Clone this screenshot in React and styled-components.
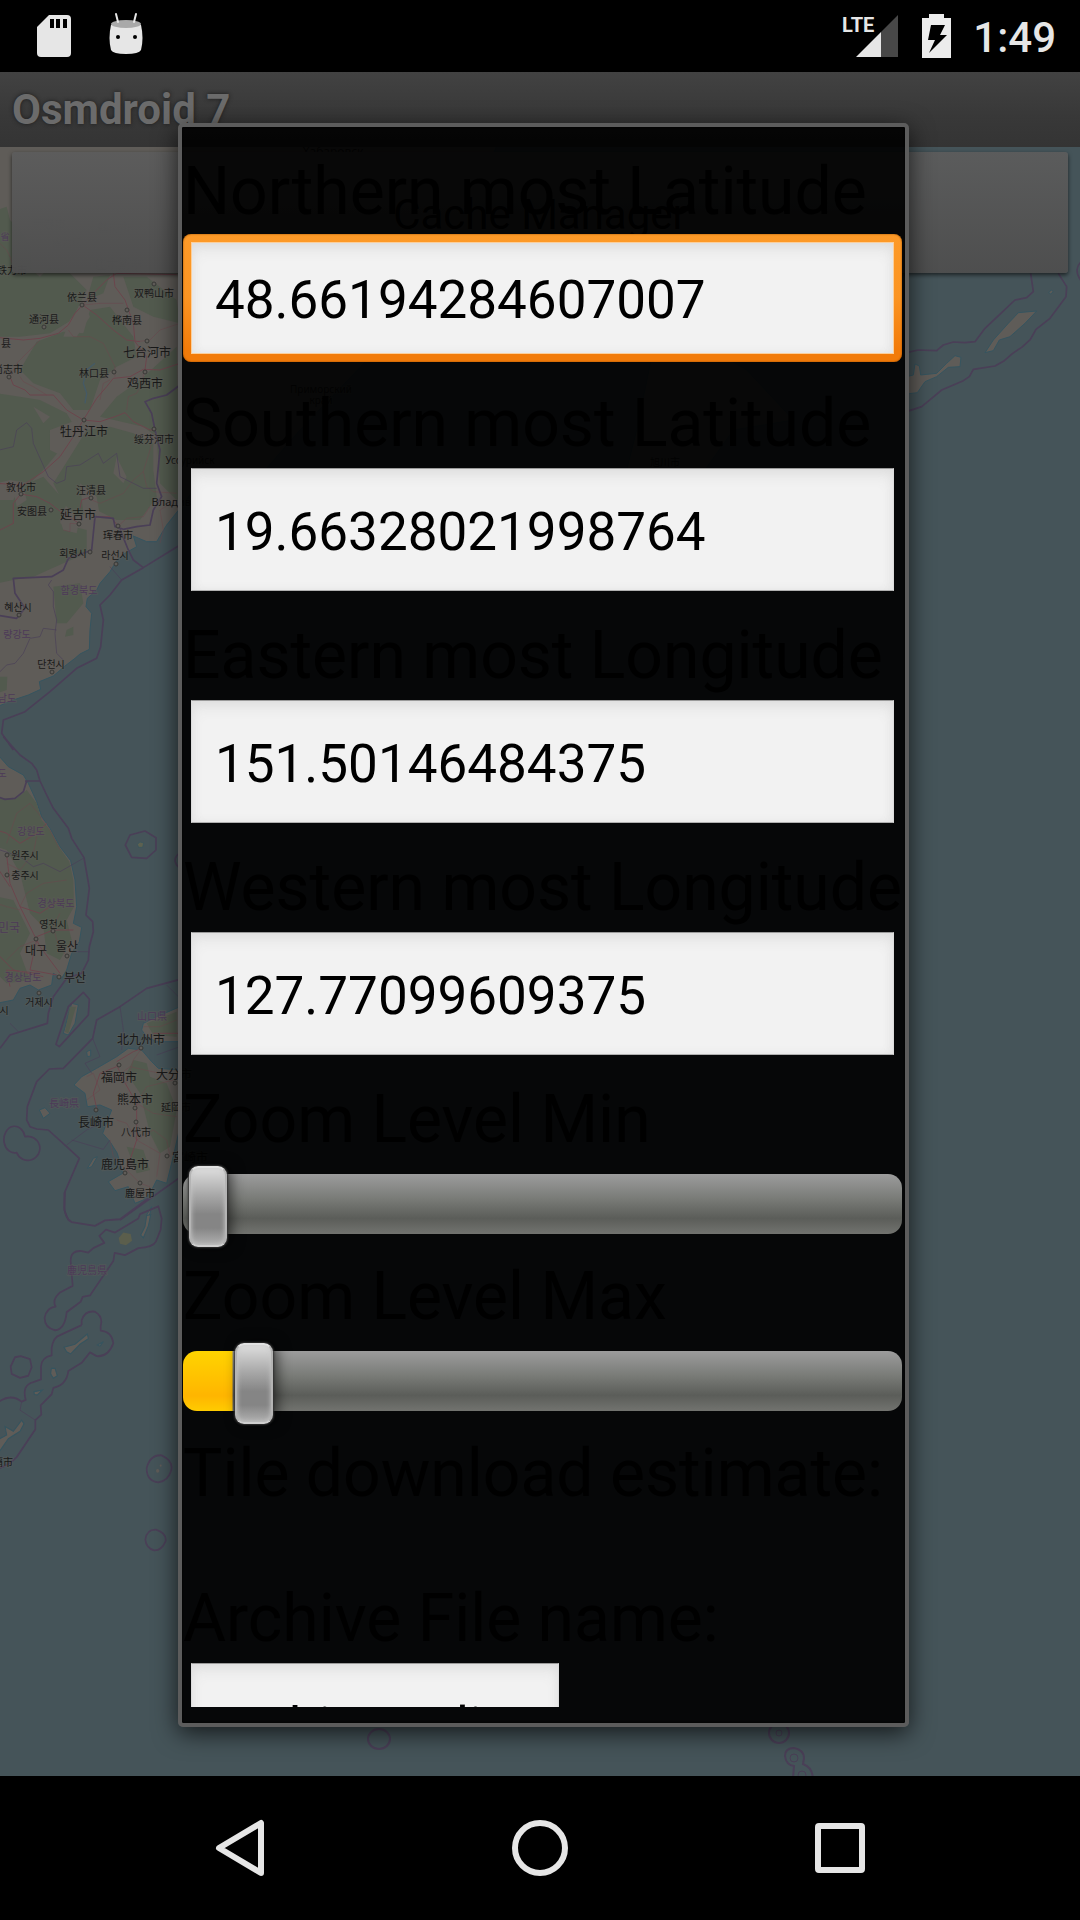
import React, { useState } from "react";
import styled, { createGlobalStyle, css } from "styled-components";

const GlobalStyle = createGlobalStyle`
  *, *::before, *::after { box-sizing: border-box; }
  body { margin: 0; background: #000; font-family: Roboto, "Noto Sans", sans-serif; }
`;

const Screen = styled.div`
  position: relative;
  display: flex;
  flex-direction: column;
  height: 100vh;
  overflow: hidden;
  background: #000;
`;

const StatusBar = styled.header`
  display: flex;
  flex: none;
  align-items: center;
  justify-content: space-between;
  height: 72px;
  padding: 0 24px 0 36px;
  background: #000;
`;

const StatusGroup = styled.div`
  display: flex;
  align-items: center;
  gap: ${(p) => p.$gap}px;
`;

const Clock = styled.time`
  margin-left: 22px;
  padding-top: 3px;
  color: #e6e6e6;
  font-size: 42px;
  font-weight: 500;
  line-height: 48px;
`;

const Signal = styled.div`
  display: flex;
  align-items: flex-start;
  margin-right: 24px;
`;

const Network = styled.span`
  margin-right: -18px;
  color: #e6e6e6;
  font-size: 20px;
  font-weight: 700;
  line-height: 20px;
`;

const Activity = styled.main`
  position: relative;
  display: flex;
  flex: 1;
  flex-direction: column;
  min-height: 0;
`;

const TitleBar = styled.h1`
  flex: none;
  height: 75px;
  margin: 0;
  padding-left: 12px;
  background: linear-gradient(#424242, #383838 60%, #343434);
  color: #6b6b6b;
  font-size: 42px;
  font-weight: 700;
  line-height: 75px;
  text-shadow: 0 0 4px #1c1c1c;
`;

const MapArea = styled.section`
  position: relative;
  flex: 1;
  min-height: 0;
  padding: 5px 12px;
  background: #455459;
`;

const MapDrawing = styled.svg`
  position: absolute;
  inset: 0;
  width: 100%;
  height: 100%;
  font-family: "Noto Sans", "Noto Sans CJK SC", "Noto Sans CJK KR", sans-serif;
`;

const MapButton = styled.button`
  position: relative;
  display: block;
  width: 100%;
  height: 121px;
  padding: 4px 0 0;
  border: 0;
  border-radius: 3px;
  background: linear-gradient(rgba(92, 92, 92, 0.95), rgba(78, 78, 78, 0.97));
  box-shadow: 0 2px 4px rgba(0, 0, 0, 0.6);
  color: #000;
  font: 400 42px/50px Roboto, sans-serif;
`;

const Overlay = styled.div`
  position: absolute;
  inset: 0;
  display: flex;
  padding: 51px 171px 49px 178px;
`;

const Dialog = styled.form`
  display: flex;
  flex: 1;
  flex-direction: column;
  min-width: 0;
  padding: 0 3px 16px 1px;
  border: 4px solid #5c5c5c;
  border-radius: 5px;
  background: rgba(0, 0, 0, 0.91);
  background-clip: padding-box;
  box-shadow: 0 6px 24px rgba(0, 0, 0, 0.7), inset 0 0 2px #000;
`;

const ScrollPane = styled.div`
  display: flex;
  flex: 1;
  flex-direction: column;
  min-height: 0;
  padding-top: 26px;
  overflow: hidden;
`;

const Field = styled.div`
  flex: none;
`;

const Label = styled.label`
  display: block;
  color: #000;
  font-size: 66px;
  line-height: 78px;
  white-space: nowrap;
`;

const activeFrame = css`
  padding: 8px;
  background: linear-gradient(#fd9a28, #fb9422 50%, #f27b0a 90%);
  box-shadow: inset 0 0 2px #8a4500;
`;

const Frame = styled.div`
  width: ${(p) => (p.$narrow ? "384px" : "100%")};
  height: 128px;
  margin: 3px 0 23px;
  padding: 2px 8px 3px;
  border-radius: 8px;
  ${(p) => p.$active && activeFrame}
`;

const TextBox = styled.input`
  display: block;
  width: 100%;
  height: 100%;
  padding: 4px 23px 0;
  border: 1px solid;
  border-color: ${(p) => (p.$active ? "#fbcf9c" : "#9a9a9a #dcdcdc #b0b0b0")};
  border-radius: 0;
  outline: 0;
  background: #f2f2f2;
  box-shadow: inset 0 8px 16px -4px #dcdcdc, inset 0 0 10px #e4e4e4;
  color: #000;
  font: 400 53px/63px Roboto, sans-serif;
`;

const Slider = styled.input`
  display: block;
  width: 100%;
  height: 60px;
  margin: 15px 0 24px;
  padding: 0 6px;
  border-radius: 14px;
  outline: 0;
  appearance: none;
  background-image: linear-gradient(#ffd400, #ffb500 75%, #ffcc00),
    linear-gradient(#9c9c9c, #7a7c78 40%, #5b5d59 74%, #72736f);
  background-repeat: no-repeat;

  &::-webkit-slider-runnable-track {
    height: 60px;
  }

  &::-webkit-slider-thumb {
    width: 38px;
    height: 81px;
    margin-top: -8px;
    border: 2px solid #c6c6c6;
    border-color: #e2e2e2 #b4b4b4 #cfcfcf;
    border-radius: 9px;
    appearance: none;
    background: linear-gradient(#dedede, #a8a8a8 35%, #858585 60%, #858585 78%, #b0b0b0);
    box-shadow: 0 0 2px 1px #333, 4px 0 14px rgba(0, 0, 0, 0.6), inset 0 0 5px #c8c8c8;
  }
`;

const Estimate = styled.output`
  display: block;
  height: 67px;
`;

const NavBar = styled.nav`
  display: flex;
  flex: none;
  align-items: center;
  justify-content: center;
  gap: 180px;
  height: 144px;
  background: #000;
`;

const NavButton = styled.button`
  display: flex;
  align-items: center;
  justify-content: center;
  width: 120px;
  height: 120px;
  padding: 0;
  border: 0;
  background: transparent;
`;

const bounds = [
  { id: "north", label: "Northern most Latitude", value: "48.66194284607007", active: true },
  { id: "south", label: "Southern most Latitude", value: "19.66328021998764" },
  { id: "east", label: "Eastern most Longitude", value: "151.50146484375" },
  { id: "west", label: "Western most Longitude", value: "127.77099609375" },
];

const MAX_ZOOM = 29;

function BoundField({ id, label, value, active, narrow }) {
  return (
    <Field>
      <Label htmlFor={id}>{label}</Label>
      <Frame $active={active} $narrow={narrow}>
        <TextBox id={id} $active={active} defaultValue={value} />
      </Frame>
    </Field>
  );
}

function ZoomField({ id, label, initial }) {
  const [value, setValue] = useState(initial);
  return (
    <Field>
      <Label htmlFor={id}>{label}</Label>
      <Slider
        id={id}
        type="range"
        min="0"
        max={MAX_ZOOM}
        value={value}
        onChange={(e) => setValue(Number(e.target.value))}
        style={{ backgroundSize: `${(value / MAX_ZOOM) * 100}% 100%, 100% 100%` }}
      />
    </Field>
  );
}

const C = {
  land: "#5f5c58",
  green: "#525a4e",
  border: "#4a3f57",
  road: "#6b454c",
  coast: "#35545f",
};

const INK = "#191919";
const PURPLE = "#4d3a58";

// text, centre x, centre y, size, colour
const places = [
  ["依兰县", 82, 297, 10], ["双鸭山市", 154, 293, 10], ["通河县", 44, 319, 10],
  ["桦南县", 127, 320, 10], ["七台河市", 147, 352, 12], ["县", 6, 343, 10],
  ["尚志市", 8, 369, 10], ["林口县", 94, 373, 10], ["鸡西市", 145, 383, 12],
  ["牡丹江市", 84, 431, 12], ["绥芬河市", 154, 439, 10], ["敦化市", 21, 487, 10],
  ["汪清县", 91, 490, 10], ["安图县", 32, 511, 10], ["延吉市", 78, 514, 12],
  ["珲春市", 118, 535, 10], ["회령시", 73, 553, 10], ["라선시", 115, 555, 10],
  ["함경북도", 79, 590, 10, PURPLE], ["혜산시", 18, 607, 10], ["량강도", 17, 634, 10, PURPLE],
  ["단천시", 51, 664, 10], ["남도", 7, 698, 10, PURPLE], ["Уссурийск", 190, 460, 10],
  ["Владивосток", 186, 501, 11], ["伊春市", 49, 223, 11, "#4f4f4f"],
  ["鹤岗市", 114, 227, 11, "#4f4f4f"], ["南岔区", 67, 243, 10, "#4f4f4f"],
  ["佳木斯市", 118, 264, 12, "#4c4c4c"], ["铁力市", 12, 270, 10], ["省", 5, 236, 9, PURPLE],
  ["도", 2, 773, 10, PURPLE], ["강원도", 31, 831, 10, PURPLE], ["원주시", 25, 855, 10],
  ["충주시", 25, 875, 10], ["경상북도", 56, 903, 10, PURPLE], ["민국", 9, 927, 12, PURPLE],
  ["영천시", 53, 924, 10], ["대구", 36, 950, 12], ["울산", 67, 946, 12],
  ["경상남도", 23, 977, 10, PURPLE], ["부산", 75, 977, 12], ["거제시", 39, 1002, 10],
  ["시", 4, 1010, 10], ["山口県", 152, 1016, 10, PURPLE], ["北九州市", 141, 1039, 12],
  ["福岡市", 119, 1077, 12], ["大分市", 174, 1074, 12], ["熊本市", 135, 1099, 12],
  ["延岡市", 176, 1107, 10], ["長崎県", 64, 1103, 10, PURPLE], ["長崎市", 96, 1122, 12],
  ["八代市", 136, 1132, 10], ["宮崎市", 190, 1157, 12], ["鹿児島市", 125, 1164, 12],
  ["鹿屋市", 140, 1193, 10], ["鹿児島県", 87, 1270, 10, PURPLE], ["那覇市", -2, 1462, 10],
  ["Хабаровск", 333, 151, 12], ["Приморский", 321, 389, 10], ["край", 321, 400, 10],
  ["旭川市", 665, 462, 10],
];

const dots = [
  [82, 305], [154, 284], [44, 327], [127, 310], [147, 341], [9, 377], [114, 372],
  [145, 372], [84, 420], [154, 429], [21, 494], [91, 498], [51, 510], [79, 524],
  [118, 526], [90, 552], [116, 564], [19, 615], [52, 672], [7, 855], [7, 875],
  [36, 939], [53, 931], [67, 956], [59, 977], [39, 993], [141, 1048], [119, 1065],
  [96, 1110], [135, 1108], [136, 1122], [175, 1083], [167, 1156], [125, 1173], [140, 1183],
];

function MapBackground() {
  const land = { fill: C.land, stroke: C.coast, strokeWidth: 3 };
  const green = { fill: C.green };
  const line = { fill: "none", stroke: C.border, strokeWidth: 5, strokeLinejoin: "round" };
  const thin = { fill: "none", stroke: C.border, strokeWidth: 2, strokeLinejoin: "round" };
  const road = { fill: "none", stroke: C.road, strokeWidth: 3, strokeLinejoin: "round" };
  const lane = { fill: "none", stroke: C.road, strokeWidth: 1.4, strokeLinejoin: "round" };
  return (
    <MapDrawing viewBox="0 147 1080 1629" preserveAspectRatio="xMinYMin slice" aria-hidden="true">
      <g transform="translate(0 270) scale(0.33333)">
        <path {...land} d="M-20-400H1500L1380-80 1240 40 1130 240 900 480 760 640 620 720 580 660 540 715 500 765 470 815 440 815 400 798 410 830 375 850 350 872 330 905 300 940 290 960 262 985 258 1010 275 1030 270 1080 268 1138 240 1152 225 1165 195 1188 160 1218 118 1235 122 1258 85 1275 40 1290-20 1315Z" />
        <path {...green} d="M-10-180 20-190 30-150 60-120 90-80 95 0 120 20 150-10 200 0 260 60 215 150 150 190 60 200-10 200ZM-10 10 50 0 110 20 180 90 120 140 30 120-10 130ZM110 215 190 185 250 190 270 120 330 110 400 200 410 260 350 290 300 330 270 420 220 420 180 370 100 340 60 300ZM-10 370 60 380 120 390 200 430 230 480 180 540 130 600 90 640 30 630-10 640ZM260 480 330 470 400 490 460 520 460 600 470 680 420 750 350 750 290 720 230 740 190 700 160 640 210 560ZM300 440 350 380 420 330 530 230 540 700 480 640 470 500 430 470ZM-10 690 40 690 60 650 130 620 200 700 180 760 260 780 260 850 190 880 100 920 40 930-10 940ZM160 950 240 940 250 1000 200 1060 170 1060ZM200 1080 220 1070 220 1095 195 1100ZM-10 1220 22 1220 20 1260-10 1270ZM370 20 440 20 530 90 540 160 460 140 400 110ZM280 20 330 15 310 70 260 90Z" />
        <path {...land} stroke="none" d="M250 100 270 140 230 200 190 200 210 150ZM150 480 230 450 250 490 190 560 150 540ZM240 640 290 680 300 740 250 730ZM350 560 380 620 370 640 340 610ZM100 410 150 440 130 460ZM40 660 70 650 80 690 50 710ZM180 750 240 740 230 790 190 780Z" />
        <path {...road} d="M-10 202 70 210 120 205 175 190 205 165 225 130 248 105 280 70 320 30 350 10 530 14M248 105 290 135 340 180 380 210 420 215M340 10 345 50 375 90 400 160 405 215 440 260 435 300M30 320 40 345 75 360 90 375 160 375 200 420 250 450 290 385 320 350 340 325 390 320 430 298 480 300 540 280M250 450 300 455 345 440 375 428 400 455 450 480 465 480M250 450 220 500 180 560 130 605 70 645-10 640M62 672 110 680 150 700 175 720 240 762M62 672 40 700 40 760-10 785M240 715 245 690 275 680M280 740 330 740 355 768" />
        <path {...lane} d="M120 210 90 240 50 280 30 320M205 180 220 200 270 200 310 220 345 290 345 320M60 320 70 335 100 350 140 375M380 420 385 380 410 370 430 330 430 310M300 390 310 340 330 330M275 690 300 700 370 670 400 630 430 605 450 540 460 490M430 605 440 650 460 665 530 670M355 768 380 745 430 740 450 710M240 762 210 760 210 785 190 780M250 105 300 100 370 100M410 215 450 210 480 180 540 160M0-80 20-60 30-40 40-10M480 820 490 780 480 720 530 690" />
        <path {...line} d="M540 345 500 375 460 385 435 395 455 430 465 480 480 540 470 640 485 680 460 720 450 765 410 770 370 778 345 770 340 745 285 740 275 840 250 850 205 865 190 900 155 920 40 925 45 970 75 1015 50 1045-10 1035" />
        <path {...line} d="M540 825 430 893 365 930 330 975 300 1005 310 1050 302 1130 290 1165 230 1195 150 1265 75 1325 10 1350 5 1390 40 1440" />
        <path {...line} d="M360 778 385 840 400 870 430 893" />
        <path {...thin} d="M-10 542 40 530 50 480 80 458 95 475 100 520 145 620 170 640 195 630 200 590 240 585 295 550 310 580 350 550 360 620 400 640 430 655 470 655M155 930 145 945 160 965 160 1010 170 1050 165 1090 170 1150 190 1170M170 1080 130 1075 120 1100 90 1105 70 1150 45 1180 20 1185-10 1215M330 890 365 930" />
        <path d="M285 280 260 300 250 340 260 370 255 400" fill="none" stroke="#455a66" strokeWidth="4" />
      </g>
      <g transform="translate(0 740) scale(0.33333)">
        <path {...land} d="M-10 40 25 80 70 105 85 130 110 185 125 230 150 265 180 320 212 362 225 420 230 500 220 550 245 562 238 605 215 640 200 690 185 715 160 700 155 735 115 750 90 735 60 745 40 780-10 790Z" />
        <path {...green} d="M-10 175 50 175 80 150 110 190 125 240 150 270 180 325 208 365 220 420 222 500 200 540 215 600 180 660 140 640 130 560 90 520 60 400 20 330-10 320ZM-10 470 40 480 90 580 60 640 90 720 20 730-10 700Z" />
        <path {...land} d="M430 850 470 830 540 800V905H470L440 890 425 870ZM385 925 425 930 455 965 475 985 540 990V1160L522 1240 500 1330 470 1320 450 1360 430 1380 405 1390 385 1340 345 1352 325 1325 368 1300 352 1240 330 1205 308 1180 335 1110 300 1095 262 1100 255 1060 222 1035 245 1010 290 985 350 950ZM215 790 235 795 225 850 205 885 190 880ZM118 1110 135 1103 150 1120 130 1135ZM260 935 272 930 272 948 262 950ZM262 1285 280 1255 292 1250 275 1280ZM440 1440 450 1420 455 1400 440 1425Z" />
        <path {...green} d="M440 850 530 815V890L460 885ZM400 960 440 970 450 1010 500 1030 530 1110 510 1220 480 1240 450 1180 420 1060 380 1000ZM380 1220 430 1230 450 1290 410 1300ZM210 800 228 800 205 880 195 875Z" />
        <path {...road} d="M-10 270 20 280 60 310 110 280 140 250M20 345 30 430 60 500 100 580 120 620 180 700M-10 380 30 440M60 500 120 520 180 480M110 590 160 570 220 570M110 600 90 690 170 705M-10 640 40 690 130 710M30 740 20 690 120 700M350 965 400 935 425 925M350 975 370 1020 410 1090 410 1200 380 1290M350 980 300 1000 280 1060 290 1105M460 880 540 880" />
        <path {...lane} d="M20 310 50 220 90 190 115 220 150 270 180 330M110 290 100 340 60 390 20 370M60 510 20 500-10 490M110 600 60 620 20 660M200 650 170 600 160 560 180 520M60 500 80 460 130 430 200 420M410 1090 440 1040 520 1020M410 1090 460 1120 530 1130M410 1200 460 1170 500 1200 510 1250M300 1000 350 1010 390 980 480 1000M380 1290 340 1250 330 1200M380 1290 420 1330 450 1340M410 1200 480 1240 470 1310M260 1010 280 1000 300 1050 260 1080M350 1140 380 1150 410 1200M425 925 400 960 380 1030M430 860 480 860 530 840" />
        <path {...line} d="M10-10 60 45 95 70 110 90 120 123 140 165 160 205 205 265 215 295 252 353 262 410 268 445 258 525 278 545 280 575 268 620 265 660 245 700 200 715 160 770 145 820 142 850 30 885 0 925M75 123H120M80 123 70 155 45 175 15 178-10 170M168 913 205 800 250 757 268 778 265 825 178 920ZM540 718 440 745 360 800 290 840 278 895 190 985 148 987 110 1025 82 1100 80 1140 90 1160 110 1167 145 1170 200 1220 238 1255 195 1355 193 1410 205 1440M540 1312 360 1440" />
        <path {...line} d="M50 1238A32 40 0 1 1 75 1190 36 36 0 1 1 50 1238ZM376 315 390 285 435 273 468 293 468 330 440 355 395 352ZM540 338Q510 360 540 385" />
        <path {...thin} d="M0 330 60 350 100 380 130 370 180 395 250 355M30 850 55 875M230 635H265M360 800 370 870 365 930M278 895 300 950 255 970 275 1000M215 1200 310 1228 330 1200M200 1215 260 1170 300 1150M470 945 540 920M500 735 540 775" />
        <path d="M412 313 420 306 431 309 428 322 416 322Z" fill="#5d6150" stroke={C.coast} strokeWidth="2" />
      </g>
      <g transform="translate(0 1200) scale(0.33333 0.37)">
        <path {...line} d="M193-20V20Q195 50 215 60L285 70 315 55 360 52 445-5M298 97 318 80 345 88 415 50 420 38 475 17 485 50 482 80 468 112Q460 128 415 130L375 149 344 143 340 165 285 238 270 258 248 262 242 275 200 303Q195 350 165 352 133 345 134 318 140 290 167 288 155 270 180 250L218 232 212 165Q212 135 245 138L265 142 280 130 313 116ZM245 338V325Q255 298 285 302 310 315 302 340V353Q335 355 340 387 325 425 290 422L270 412 245 440 205 462Q200 500 160 508L155 525 122 555 124 580 106 595V620L50 695Q30 715-10 728M-10 550Q30 520 65 545L77 540Q65 500 100 492L123 485V450Q125 425 155 420V400Q160 370 180 365L245 338M32 450 45 425 62 422 90 430 95 452 85 475 60 481 35 470ZM440 725Q450 688 485 690 520 705 514 730 505 760 475 763 440 760 440 725ZM436 918Q440 890 468 891 500 900 497 922 485 948 462 947 438 940 436 918Z" />
        <path {...thin} d="M65 545 60 568 106 595" />
        <path {...land} d="M440 42 452 40 445 70 430 102 422 95 435 72ZM192 398 225 390 262 362 265 375 240 390 212 416 200 410ZM154 455 165 455 172 475 160 482 152 470ZM102 518 127 514 112 527 103 526ZM292 392 310 383 300 395ZM15 612 40 625 65 595 72 605 60 625 25 645-10 690V650L20 635Z" />
        <path d="M356 103 370 88 392 92 396 110 378 122 360 118Z" fill="#5b5e4c" />
        <circle cx="473" cy="732" r="5" fill={C.land} />
        <circle cx="482" cy="718" r="3" fill={C.land} />
      </g>
      <g transform="translate(560 110) scale(0.33333)">
        <path {...line} d="M1412 490 1420 545 1400 563 1365 570 1325 608 1275 655 1245 695 1215 698 1180 696 1150 705 1130 722 1075 720 1040 728M1495 490 1520 530 1518 560 1470 625 1428 658 1410 690 1385 712 1358 730 1333 752 1305 768 1240 778 1228 800 1210 812 1145 840 1115 865 1085 890 1040 905M1570 450Q1535 475 1565 515" />
        <path {...land} d="M1275 728 1300 690 1345 640 1375 608 1430 603 1395 640 1350 680 1318 690 1300 722ZM1040 800 1060 795 1065 762 1078 768 1082 795 1130 790 1160 760 1185 737 1203 742 1200 770 1165 772 1130 800 1095 815 1072 848 1040 852ZM1466 548 1474 540 1480 545 1472 552ZM300 620 420 700 560 780 700 930 520 960 420 1100 330 1200 180 1160 230 960Z" />
      </g>
      <g fill="none" stroke={C.border} strokeWidth="2">
        <ellipse cx="379" cy="1739" rx="11" ry="10" />
        <circle cx="779" cy="1733" r="10" />
        <circle cx="779" cy="1733" r="3" strokeWidth="1" />
        <path d="M785 1756q0-8 9-8 10 2 10 10l-1 6q9 3 10 14M785 1756q1 9 9 10l-1 12" />
        <circle cx="794" cy="1758" r="4" strokeWidth="1" />
        <circle cx="802" cy="1775" r="4" strokeWidth="1" />
      </g>
      <g fill={C.land} stroke="#383836">
        {dots.map(([x, y]) => (
          <circle key={`${x}-${y}`} cx={x} cy={y} r="2" />
        ))}
      </g>
      <g textAnchor="middle" dominantBaseline="central" stroke={C.land} strokeOpacity="0.4" strokeWidth="2" paintOrder="stroke">
        {places.map(([name, x, y, size, fill]) => (
          <text key={name + y} x={x} y={y} fontSize={size} fill={fill || INK}>
            {name}
          </text>
        ))}
      </g>
    </MapDrawing>
  );
}

export default function App() {
  return (
    <>
      <GlobalStyle />
      <Screen>
        <StatusBar>
          <StatusGroup $gap={37}>
            <svg width="35" height="42" viewBox="0 0 35 42" aria-hidden="true">
              <path fill="#e6e6e6" d="M13 0H31a4 4 0 0 1 4 4V38a4 4 0 0 1-4 4H5a4 4 0 0 1-4-4V12Z" />
              <path d="M14 4h4v9h-4zM20 4h4v9h-4zM27 4h4v9h-4z" />
            </svg>
            <svg width="36" height="48" viewBox="0 0 36 48" aria-hidden="true">
              <path fill="#e6e6e6" d="M3 13H33Q36 26 33 38Q31 42 18 42Q5 42 3 38Q0 26 3 13Z" />
              <ellipse cx="18" cy="12" rx="15" ry="4" fill="#a9a9a9" />
              <path d="M8 2 10 10M28 2 26 10" stroke="#e6e6e6" strokeWidth="2" strokeLinecap="round" />
              <circle cx="10" cy="25" r="2" />
              <circle cx="27" cy="25" r="2" />
            </svg>
          </StatusGroup>
          <StatusGroup $gap={0}>
            <Signal>
              <Network>LTE</Network>
              <svg width="42" height="42" viewBox="0 0 42 42" aria-hidden="true">
                <path fill="#484848" d="M42 0V42H25V17Z" />
                <path fill="#e6e6e6" d="M25 17V42H0Z" />
              </svg>
            </Signal>
            <svg width="29" height="44" viewBox="0 0 29 44" aria-hidden="true">
              <path fill="#ececec" d="M7 0H22V4H29V44H0V4H7Z" />
              <path d="M9 11H23L18 21H25L7 39L13 26H6Z" />
            </svg>
            <Clock>1:49</Clock>
          </StatusGroup>
        </StatusBar>
        <Activity>
          <TitleBar>Osmdroid 7</TitleBar>
          <MapArea>
            <MapBackground />
            <MapButton type="button">Cache Manager</MapButton>
          </MapArea>
          <Overlay>
            <Dialog onSubmit={(e) => e.preventDefault()}>
              <ScrollPane>
                {bounds.map((b) => (
                  <BoundField key={b.id} {...b} />
                ))}
                <ZoomField id="zoom-min" label="Zoom Level Min" initial={0} />
                <ZoomField id="zoom-max" label="Zoom Level Max" initial={2} />
                <Field>
                  <Label htmlFor="estimate">Tile download estimate:</Label>
                  <Estimate id="estimate" />
                </Field>
                <BoundField id="archive" label="Archive File name:" value="archive.sqlite" narrow />
              </ScrollPane>
            </Dialog>
          </Overlay>
        </Activity>
        <NavBar>
          <NavButton type="button" aria-label="Back">
            <svg width="50" height="58" viewBox="0 0 50 58" aria-hidden="true">
              <path d="M46 4V54L4 29Z" fill="none" stroke="#e6e6e6" strokeWidth="6" strokeLinejoin="round" />
            </svg>
          </NavButton>
          <NavButton type="button" aria-label="Home">
            <svg width="56" height="56" viewBox="0 0 56 56" aria-hidden="true">
              <circle cx="28" cy="28" r="25" fill="none" stroke="#e6e6e6" strokeWidth="6" />
            </svg>
          </NavButton>
          <NavButton type="button" aria-label="Overview">
            <svg width="50" height="50" viewBox="0 0 50 50" aria-hidden="true">
              <rect x="3" y="3" width="44" height="44" rx="1" fill="none" stroke="#e6e6e6" strokeWidth="6" strokeLinejoin="round" />
            </svg>
          </NavButton>
        </NavBar>
      </Screen>
    </>
  );
}
